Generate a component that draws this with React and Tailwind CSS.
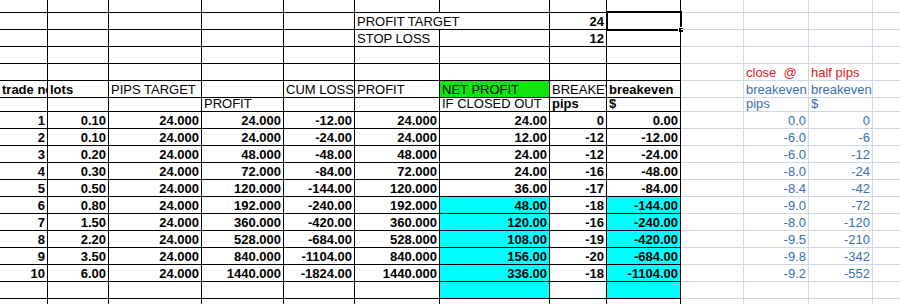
import React from 'react';
import clsx from 'clsx';

const COLS = [
    'w-[48px]', 'w-[61px]', 'w-[93px]', 'w-[82px]', 'w-[71px]', 'w-[85px]', 'w-[110px]',
    'w-[57px]', 'w-[74px]', 'w-[63px]', 'w-[65px]', 'w-[64px]', 'w-[40px]',
];

const data = [
    ['1', '0.10', '24.000', '24.000', '-12.00', '24.000', '24.00', '0', '0.00', '0.0', '0'],
    ['2', '0.10', '24.000', '24.000', '-24.00', '24.000', '12.00', '-12', '-12.00', '-6.0', '-6'],
    ['3', '0.20', '24.000', '48.000', '-48.00', '48.000', '24.00', '-12', '-24.00', '-6.0', '-12'],
    ['4', '0.30', '24.000', '72.000', '-84.00', '72.000', '24.00', '-16', '-48.00', '-8.0', '-24'],
    ['5', '0.50', '24.000', '120.000', '-144.00', '120.000', '36.00', '-17', '-84.00', '-8.4', '-42'],
    ['6', '0.80', '24.000', '192.000', '-240.00', '192.000', '48.00', '-18', '-144.00', '-9.0', '-72'],
    ['7', '1.50', '24.000', '360.000', '-420.00', '360.000', '120.00', '-16', '-240.00', '-8.0', '-120'],
    ['8', '2.20', '24.000', '528.000', '-684.00', '528.000', '108.00', '-19', '-420.00', '-9.5', '-210'],
    ['9', '3.50', '24.000', '840.000', '-1104.00', '840.000', '156.00', '-20', '-684.00', '-9.8', '-342'],
    ['10', '6.00', '24.000', '1440.000', '-1824.00', '1440.000', '336.00', '-18', '-1104.00', '-9.2', '-552'],
];

// one spreadsheet cell; col decides width and grid colour
const Cell = ({ col, children, right, bold, bg, color, open, clip, selected }) => (
    <div
        className={clsx(
            'relative shrink-0 flex items-end border-b px-[2px] leading-[15px] whitespace-pre',
            COLS[col],
            col < 9 ? 'border-black' : 'border-[#d0d7e5]',
            open ? 'border-r-0 pr-[3px]' : 'border-r',
            col < 9 ? 'border-r-black' : 'border-r-[#d0d7e5]',
            right && 'justify-end',
            bold && 'font-bold',
            clip && 'overflow-hidden',
            bg,
            color || 'text-black'
        )}
    >
        {children}
        {selected && (
            <>
                <div className="absolute -top-[2px] -left-[1px] -right-[2px] -bottom-[2px] border-2 border-black" />
                <div className="absolute -right-[4px] -bottom-[4px] w-[6px] h-[6px] bg-black border border-white" />
            </>
        )}
    </div>
);

const Row = ({ h, cells = {} }) => (
    <div className={clsx('flex', h)}>
        {COLS.map((_, i) => (
            <Cell key={i} col={i} {...(cells[i] || {})} />
        ))}
    </div>
);

const red = 'text-[#e3161e]';
const blue = 'text-[#3a6db4]';

const App = () => {
    return (
        <div className="w-[900px] h-[304px] overflow-hidden bg-white font-['Liberation_Sans',Arial,sans-serif] text-[13px]">
            <Row h="h-[13px]" />
            <Row
                h="h-[17px]"
                cells={{
                    5: { children: 'PROFIT TARGET', open: true },
                    7: { children: '24', right: true, bold: true },
                    8: { selected: true },
                }}
            />
            <Row
                h="h-[17px]"
                cells={{
                    5: { children: 'STOP LOSS' },
                    7: { children: '12', right: true, bold: true },
                }}
            />
            <Row h="h-[17px]" />
            <Row
                h="h-[17px]"
                cells={{
                    10: { children: 'close  @', color: red },
                    11: { children: 'half pips', color: red },
                }}
            />
            <Row
                h="h-[17px]"
                cells={{
                    0: { children: 'trade no.', bold: true, clip: true },
                    1: { children: 'lots', bold: true },
                    2: { children: 'PIPS TARGET' },
                    4: { children: 'CUM LOSS', clip: true },
                    5: { children: 'PROFIT' },
                    6: { children: 'NET PROFIT', bg: 'bg-[#0ee40e]' },
                    7: { children: 'BREAKEVEN', clip: true },
                    8: { children: 'breakeven', bold: true },
                    10: { children: 'breakeven', color: blue },
                    11: { children: 'breakeven', color: blue },
                }}
            />
            <Row
                h="h-[14px]"
                cells={{
                    3: { children: 'PROFIT' },
                    6: { children: 'IF CLOSED OUT' },
                    7: { children: 'pips', bold: true },
                    8: { children: '$', bold: true },
                    10: { children: 'pips', color: blue },
                    11: { children: '$', color: blue },
                }}
            />
            {data.map((r, idx) => {
                const cyan = idx >= 5 ? 'bg-[#00ffff]' : undefined;
                const cells = {};
                r.slice(0, 9).forEach((v, i) => {
                    cells[i] = { children: v, right: true, bold: true };
                });
                cells[6].bg = cyan;
                cells[8].bg = cyan;
                cells[10] = { children: r[9], right: true, color: blue };
                cells[11] = { children: r[10], right: true, color: blue };
                return <Row key={idx} h="h-[17px]" cells={cells} />;
            })}
            <Row h="h-[17px]" cells={{ 6: { bg: 'bg-[#00ffff]' }, 8: { bg: 'bg-[#00ffff]' } }} />
            <Row h="h-[17px]" />
        </div>
    );
};

export default App;
